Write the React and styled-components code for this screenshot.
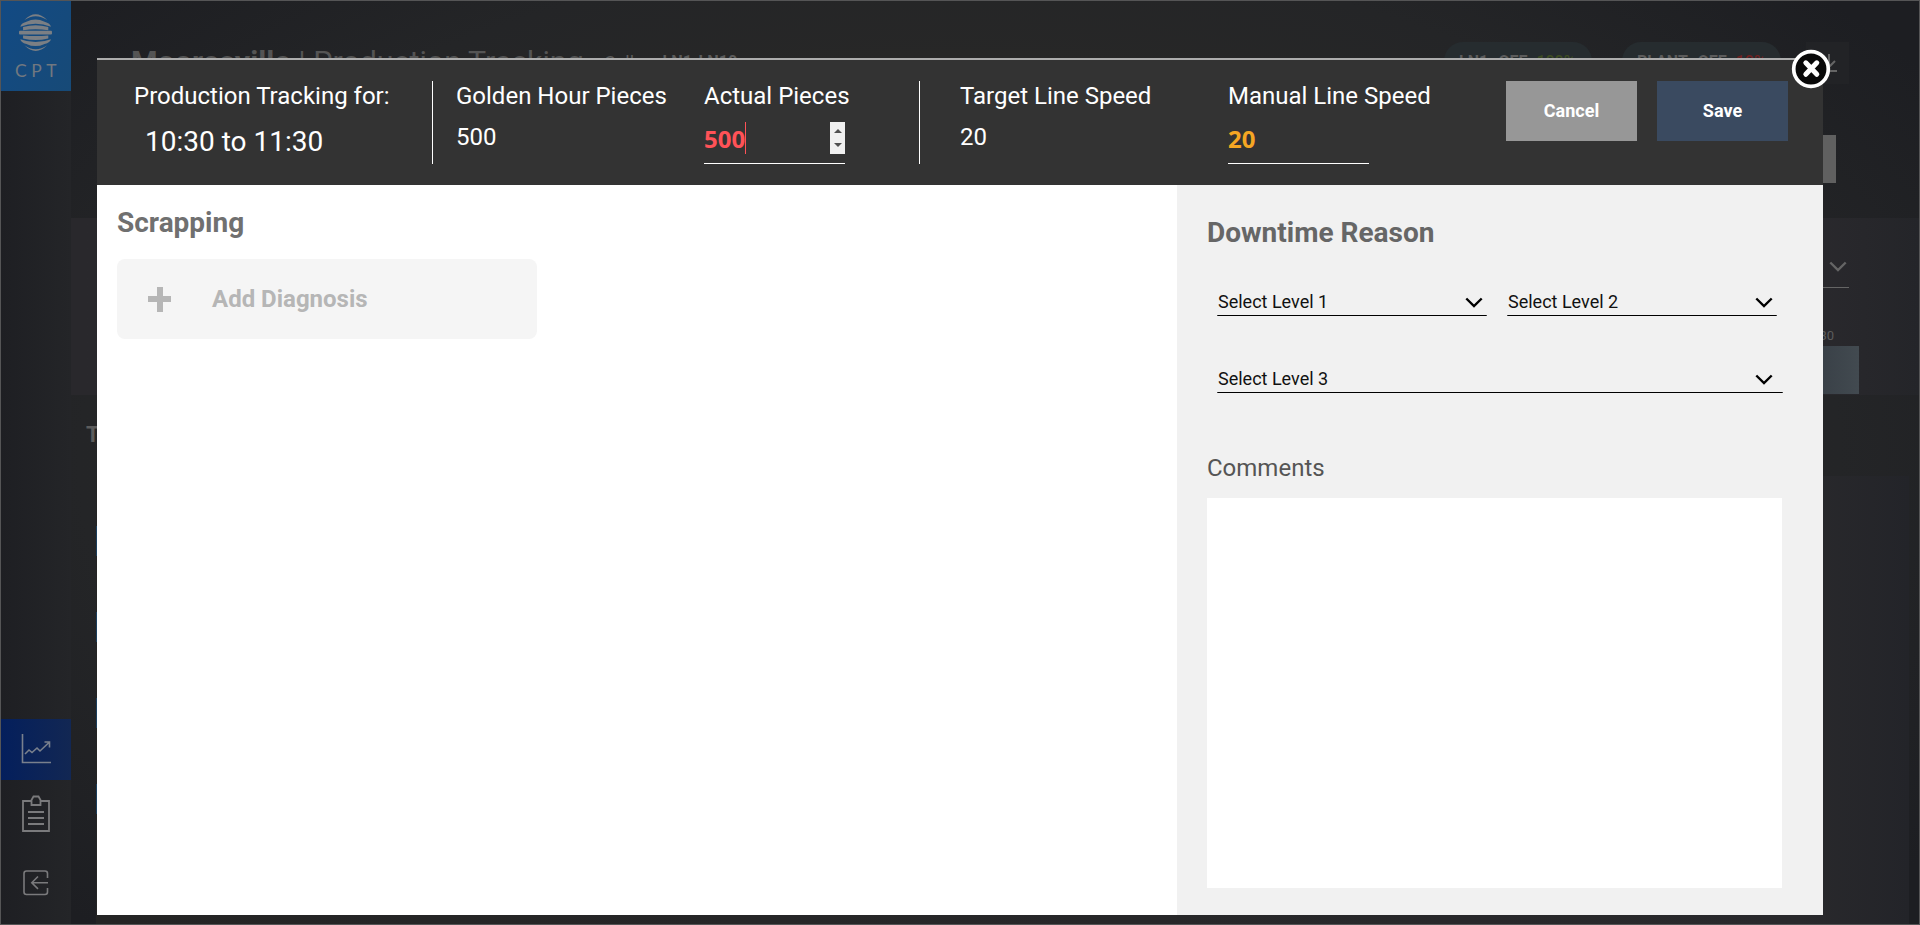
import React from 'react';
import styled, { createGlobalStyle } from 'styled-components';

const Global = createGlobalStyle`
  * { box-sizing: border-box; }
  body { margin: 0; background: #1f1f22; font-family: Roboto, "Liberation Sans", sans-serif; overflow: hidden; }
  button, input, textarea { font-family: inherit; }
`;

const Page = styled.div`
  position: relative;
  display: flex;
  width: 1920px;
  height: 925px;
  overflow: hidden;
  border: 1px solid #555556;
  background: radial-gradient(ellipse 1000px 580px at 50% 50%, #272727 70%, #242527 88%, #1d1e22 118%);
  color: #5c5c5c;
`;

const Sidebar = styled.nav`
  width: 70px;
  display: flex;
  flex-direction: column;
  background: linear-gradient(90deg, #1e1f23, #242528);
`;

const Brand = styled.div`
  height: 90px;
  display: flex;
  flex-direction: column;
  align-items: center;
  padding: 13px 1px 0 0;
  background: linear-gradient(120deg, #124a84, #174a77);
  color: #717880;
  font: 17.5px/20px Lato, sans-serif;
  letter-spacing: 4.5px;
`;

const BrandName = styled.span`
  margin: 10px 0 0 5px;
`;

const NavItem = styled.a`
  display: flex;
  align-items: center;
  justify-content: center;
  height: ${p => p.$h}px;
  margin-top: ${p => p.$mt || 0}px;
  padding-bottom: 1px;
  background: ${p => (p.$active ? 'linear-gradient(90deg, #041f5c, #122753)' : 'transparent')};
`;

const Main = styled.main`
  flex: 1;
  display: flex;
  flex-direction: column;
`;

const TopBar = styled.header`
  height: 120px;
  display: flex;
  align-items: flex-start;
  padding: 41px 70px 0 60px;
`;

const PageTitle = styled.h1`
  margin: 4px 0 0;
  font-size: 30.4px;
  line-height: 32px;
  font-weight: 400;
  color: #545454;
  white-space: nowrap;
  width: 473px;
`;

const LineInfo = styled.div`
  display: flex;
  gap: 24px;
  margin-top: 11px;
  font-size: 16.3px;
  line-height: 18px;
  flex: 1;
`;

const LineKind = styled.span`
  font-size: 18px;
  line-height: 20px;
`;

const Pill = styled.div`
  width: ${p => p.$w}px;
  height: 38px;
  margin-right: 30px;
  padding: 9px 0 0 15px;
  border-radius: 19px;
  background: #262c2f;
  font-size: 16px;
  line-height: 21px;
  font-weight: 700;
  white-space: nowrap;
`;

const Rate = styled.span`
  margin-left: 5px;
  font-weight: 500;
  color: ${p => p.$color};
`;

const Download = styled.div`
  width: 43px;
  height: 42px;
  margin-left: -5px;
  padding: 11px 0 0 15px;
  background: #222326;
`;

const ActionRow = styled.div`
  height: 97px;
  padding: 14px 83px 0 0;
  display: flex;
  justify-content: flex-end;
`;

const Action = styled.div`
  width: 120px;
  height: 48px;
  background: #606060;
`;

const FilterPanel = styled.section`
  height: 177px;
  display: flex;
  flex-direction: column;
  align-items: flex-end;
  background: linear-gradient(90deg, #29282c, #2a292d 94%, #242529);
`;

const FilterField = styled.div`
  width: 180px;
  height: 70px;
  margin-right: 70px;
  padding: 43px 2px 0 0;
  display: flex;
  justify-content: flex-end;
  border-bottom: 1px solid #656565;
`;

const Slot = styled.div`
  width: 100px;
  margin: 41px 60px 0 0;
  font-size: 13px;
  line-height: 14px;
  text-align: right;
  padding-right: 25px;
`;

const SlotBar = styled.div`
  width: 100px;
  height: 48px;
  margin: 3px 60px 0 0;
  background: linear-gradient(90deg, #394047 60%, #424a50);
`;

const TableHead = styled.div`
  height: 81px;
  padding: 28px 0 0 15px;
  font-size: 22px;
  line-height: 24px;
  font-weight: 700;
`;

const Table = styled.div`
  flex: 1;
  margin: 0 10px 0 25px;
  padding-top: 50px;
  background: linear-gradient(90deg, #242424, #29292c 94%, #232429);
`;

const RowMark = styled.div`
  width: 20px;
  height: 30px;
  margin-bottom: 56px;
  background: #1b3f5e;
`;

const Modal = styled.section`
  position: absolute;
  left: 96px;
  top: 57px;
  width: 1726px;
  height: 857px;
  display: flex;
  flex-direction: column;
  background: #fff;
`;

const ModalHeader = styled.header`
  height: 127px;
  display: flex;
  align-items: flex-start;
  padding: 21px 35px 0 37px;
  border-top: 2px solid #adadad;
  background: #333;
  color: #fff;
`;

const Metric = styled.div`
  width: ${p => p.$w}px;
  padding: 1px 0 0 ${p => p.$pl || 0}px;
  height: 83px;
  border-right: ${p => (p.$divider ? '1px solid #fff' : 'none')};
`;

const Label = styled.div`
  font-size: 24px;
  line-height: 28px;
  white-space: nowrap;
`;

const Value = styled.div`
  margin: ${p => (p.$large ? '15px 0 0 11px' : '13px 0 0')};
  font-size: ${p => (p.$large ? 28 : 24)}px;
  line-height: ${p => (p.$large ? 34 : 28)}px;
`;

const Entry = styled.div`
  display: flex;
  align-items: flex-start;
  width: 141px;
  height: 42px;
  margin-top: 12px;
  border-bottom: 1px solid #fff;
  color: ${p => p.$color};
  font: 700 24px/33px "Noto Sans", "Open Sans", sans-serif;
`;

const Caret = styled.span`
  width: 1px;
  height: 32px;
  background: #ff5257;
`;

const Spinner = styled.span`
  width: 15px;
  height: 32px;
  margin-left: auto;
  background: #f0f0f0;
`;

const Buttons = styled.div`
  display: flex;
  gap: 20px;
  margin-left: auto;
`;

const Button = styled.button`
  width: 131px;
  height: 60px;
  padding: 0 0 2px;
  border: 0;
  background: ${p => (p.$primary ? '#3a4a60' : '#979797')};
  color: #fff;
  font-size: 18px;
  font-weight: 700;
`;

const Close = styled.button`
  position: absolute;
  left: 1694px;
  top: -9px;
  width: 40px;
  height: 40px;
  padding: 0;
  border: 0;
  background: none;
`;

const ModalBody = styled.div`
  flex: 1;
  display: flex;
`;

const Scrapping = styled.div`
  width: 1080px;
  padding: 21px 20px;
`;

const SectionTitle = styled.h2`
  margin: 0;
  font-size: 28px;
  line-height: 34px;
  font-weight: 700;
  color: ${p => p.$color || '#666'};
`;

const AddDiagnosis = styled.button`
  display: flex;
  align-items: center;
  width: 420px;
  height: 80px;
  margin-top: 19px;
  padding: 0 0 0 31px;
  gap: 40px;
  border: 0;
  border-radius: 8px;
  background: #f5f5f5;
  color: #b6b6b6;
  font-size: 24px;
  font-weight: 700;
`;

const Downtime = styled.aside`
  width: 646px;
  padding: 31px 41px 27px 30px;
  display: flex;
  flex-direction: column;
  background: #f1f1f1;
`;

const Selects = styled.div`
  display: grid;
  grid-template-columns: 270px 270px;
  column-gap: 20px;
  row-gap: 48px;
  margin: 37px 0 0 10px;
`;

const Select = styled.div`
  display: flex;
  align-items: flex-start;
  justify-content: space-between;
  width: ${p => (p.$wide ? 566 : 270)}px;
  height: 29px;
  padding: 4px ${p => (p.$wide ? 10 : 4)}px 0 1px;
  border-bottom: 1px solid #000;
  border-radius: 1px;
  color: #111;
  font-size: 18px;
  line-height: 21px;

  svg {
    margin-top: 5.5px;
  }
`;

const CommentsLabel = styled.label`
  margin-top: 61px;
  font-size: 24px;
  line-height: 28px;
  color: #555;
`;

const Comments = styled.textarea`
  flex: 1;
  margin-top: 16px;
  border: 0;
  resize: none;
  background: #fff;
`;

const Chevron = ({ color = '#000' }) => (
  <svg width="18" height="12" viewBox="0 0 18 12" fill="none" stroke={color} strokeWidth="2.4">
    <path d="M1.3 1.5 9 9l7.7-7.5" />
  </svg>
);

const Globe = () => (
  <svg width="33" height="37" viewBox="58 42 98 110" fill="#7b7f84">
    <path d="M74 60Q107 25 142 60Q107 37 74 60Z" />
    <path d="M62 80Q63 70 80 65Q107 51 134 65Q151 70 153 80Q107 62 62 80Z" />
    <path d="M70 81Q107 70 145 81V90Q107 85 70 90Z" />
    <rect x="58" y="92" width="98" height="11" rx="3" />
    <path d="M70 106Q107 109 145 106V115Q107 124 70 115Z" />
    <path d="M62 117Q63 127 80 131Q107 144 134 131Q151 127 153 117Q107 134 62 117Z" />
    <path d="M74 135Q107 169 142 135Q107 158 74 135Z" />
  </svg>
);

const ChartIcon = () => (
  <svg width="30" height="30" viewBox="0 0 30 30" fill="none" stroke="#79808d" strokeWidth="1.6">
    <path d="M1.500 0v28.500H30M4 20l4-4 3 2.500 5-4.500 3 3L28 8.500M23.500 8h5v5.500" />
  </svg>
);

const ClipboardIcon = () => (
  <svg width="28" height="37" viewBox="0 0 28 37" fill="none" stroke="#7a7a7c" strokeWidth="1.800">
    <path d="M9.500 6H1v30h26V6h-8.500M9.500 10h9V5L16.500 1.500h-5L9.500 5ZM6 17h16M6 23h16M6 29h16" />
  </svg>
);

const ExitIcon = () => (
  <svg width="26" height="26" viewBox="0 0 26 26" fill="none" stroke="#7a7a7c" strokeWidth="1.600">
    <path d="M24.500 8V3.500Q24.500 1 22 1h-18.500Q1 1 1 3.500v18.500Q1 24.500 3.500 24.500h18.500Q24.500 24.500 24.500 22V18M25 12.700H9M15 6.500l-6.200 6.200 6.200 6.200" />
  </svg>
);

const CloseIcon = () => (
  <svg width="40" height="40" viewBox="0 0 40 40">
    <circle cx="20" cy="20" r="17.300" fill="#090909" stroke="#fff" strokeWidth="3.700" />
    <path d="M14.800 13.800l11 11.500M25.800 13.800l-11 11.500" stroke="#fff" strokeWidth="5" strokeLinecap="round" />
  </svg>
);

export default function App() {
  return (
    <Page>
      <Global />
      <Sidebar>
        <Brand><Globe /><BrandName>CPT</BrandName></Brand>
        <NavItem $active $h={61} $mt={628}><ChartIcon /></NavItem>
        <NavItem $h={67}><ClipboardIcon /></NavItem>
        <NavItem $h={73}><ExitIcon /></NavItem>
      </Sidebar>
      <Main>
        <TopBar>
          <PageTitle><b>Mooresville</b> | Production Tracking</PageTitle>
          <LineInfo><LineKind>Cell:</LineKind><b>LN1-LN10</b></LineInfo>
          <Pill $w={148}>LN1 -OEE <Rate $color="#3d4d22">100%</Rate></Pill>
          <Pill $w={159}>PLANT -OEE <Rate $color="#702020">10%</Rate></Pill>
          <Download>
            <svg width="16" height="20" viewBox="0 0 16 20" fill="none" stroke="#656565" strokeWidth="2">
              <path d="M8 1v13M2 8l6 6 6-6M0 18h16" />
            </svg>
          </Download>
        </TopBar>
        <ActionRow><Action /></ActionRow>
        <FilterPanel>
          <FilterField><Chevron color="#656565" /></FilterField>
          <Slot>10:30</Slot>
          <SlotBar />
        </FilterPanel>
        <TableHead>Tracking</TableHead>
        <Table><RowMark /><RowMark /><RowMark /><RowMark /></Table>
      </Main>
      <Modal>
        <ModalHeader>
          <Metric $w={299} $divider>
            <Label>Production Tracking for:</Label>
            <Value $large>10:30 to 11:30</Value>
          </Metric>
          <Metric $w={248} $pl={23}>
            <Label>Golden Hour Pieces</Label>
            <Value>500</Value>
          </Metric>
          <Metric $w={239} $pl={23} $divider>
            <Label>Actual Pieces</Label>
            <Entry $color="#ff5257">
              500<Caret />
              <Spinner>
                <svg width="15" height="32" viewBox="0 0 15 32" fill="#505050">
                  <path d="M4 11l4-4 4 4ZM4 21l4 4 4-4Z" />
                </svg>
              </Spinner>
            </Entry>
          </Metric>
          <Metric $w={268} $pl={40}>
            <Label>Target Line Speed</Label>
            <Value>20</Value>
          </Metric>
          <Metric $w={230} $pl={40}>
            <Label>Manual Line Speed</Label>
            <Entry $color="#f5a623">20</Entry>
          </Metric>
          <Buttons>
            <Button>Cancel</Button>
            <Button $primary>Save</Button>
          </Buttons>
        </ModalHeader>
        <ModalBody>
          <Scrapping>
            <SectionTitle $color="#707070">Scrapping</SectionTitle>
            <AddDiagnosis>
              <svg width="24" height="25" viewBox="0 0 24 25" fill="#b6b6b6">
                <path d="M9 0h6v9h8v6h-8v10H9V15H0V9h9Z" />
              </svg>
              Add Diagnosis
            </AddDiagnosis>
          </Scrapping>
          <Downtime>
            <SectionTitle>Downtime Reason</SectionTitle>
            <Selects>
              <Select>Select Level 1<Chevron /></Select>
              <Select>Select Level 2<Chevron /></Select>
              <Select $wide>Select Level 3<Chevron /></Select>
            </Selects>
            <CommentsLabel>Comments</CommentsLabel>
            <Comments aria-label="Comments" />
          </Downtime>
        </ModalBody>
        <Close aria-label="Close"><CloseIcon /></Close>
      </Modal>
    </Page>
  );
}
